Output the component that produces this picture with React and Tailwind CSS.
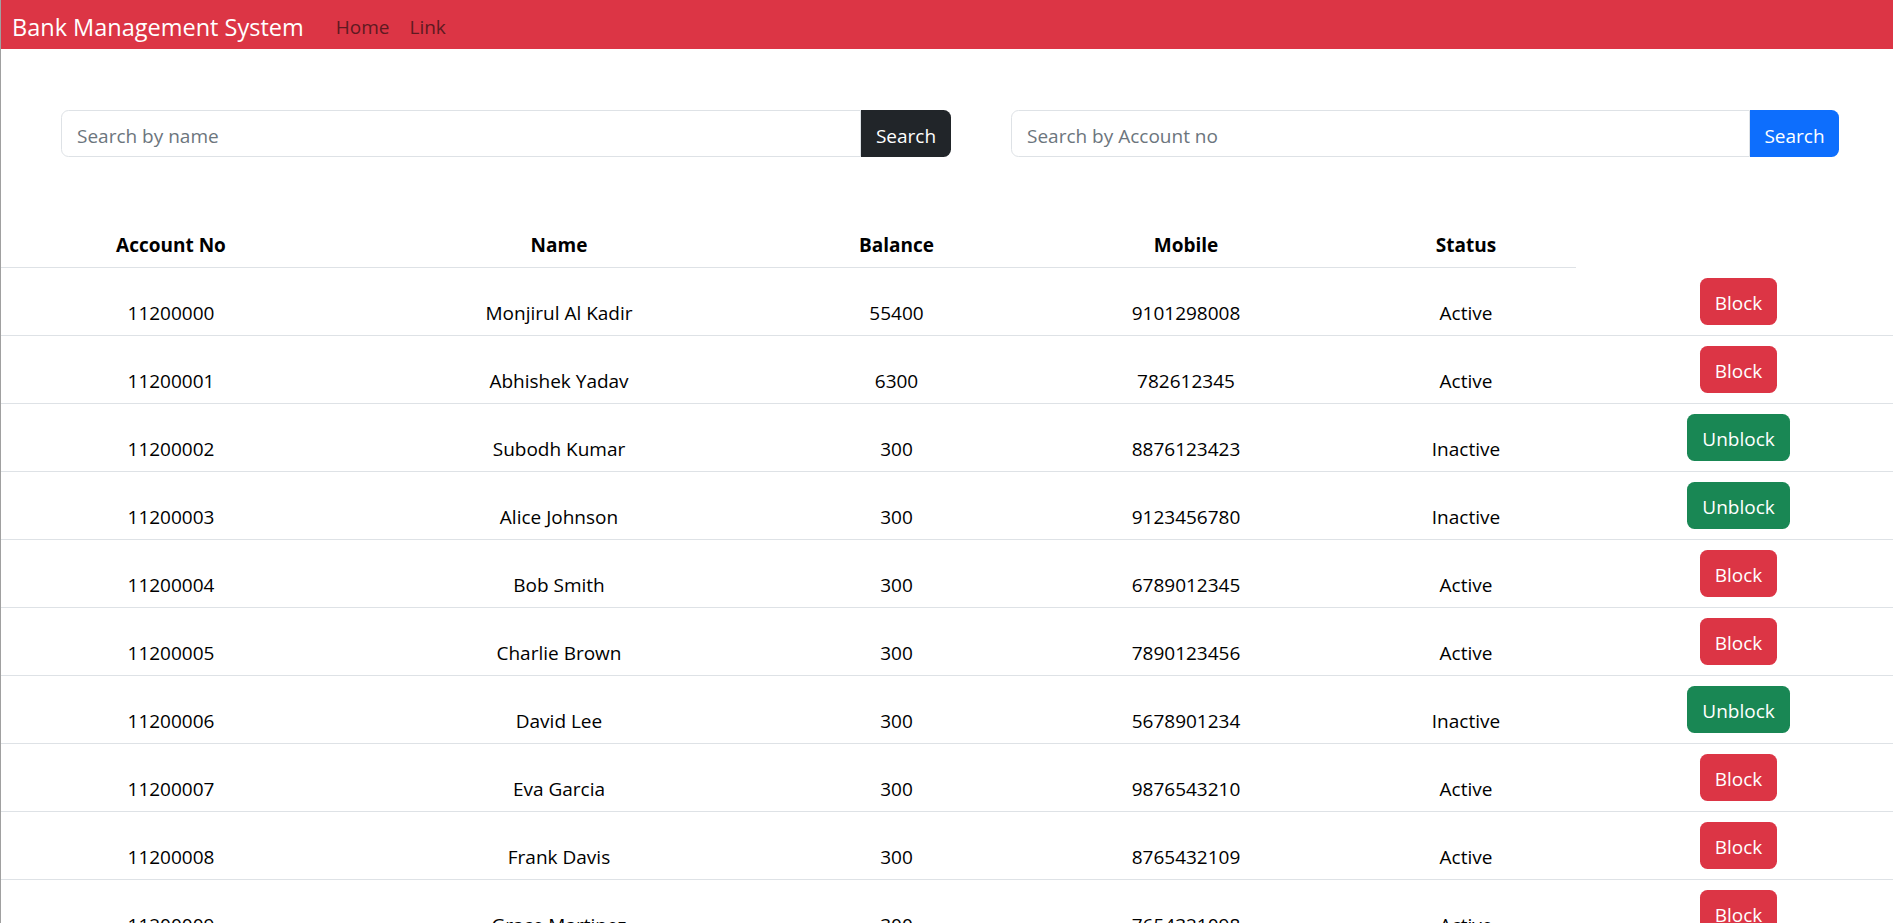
import React from "react";

const rows = [
  ["11200000", "Monjirul Al Kadir", "55400", "9101298008", "Active"],
  ["11200001", "Abhishek Yadav", "6300", "782612345", "Active"],
  ["11200002", "Subodh Kumar", "300", "8876123423", "Inactive"],
  ["11200003", "Alice Johnson", "300", "9123456780", "Inactive"],
  ["11200004", "Bob Smith", "300", "6789012345", "Active"],
  ["11200005", "Charlie Brown", "300", "7890123456", "Active"],
  ["11200006", "David Lee", "300", "5678901234", "Inactive"],
  ["11200007", "Eva Garcia", "300", "9876543210", "Active"],
  ["11200008", "Frank Davis", "300", "8765432109", "Active"],
  ["11200009", "Grace Martinez", "300", "7654321098", "Active"],
  ["11200010", "Henry Wilson", "300", "6543210987", "Active"],
];

const cols = "grid grid-cols-[340px_436px_239px_340px_220px_325px]";

export default function App() {
  return (
    <div className="h-[923px] overflow-hidden bg-white border-l border-[#a0a0a0] font-['Segoe_UI','Open_Sans',sans-serif] text-[19px] text-[#212529]">
      <nav className="h-[49px] bg-[#dc3545] flex items-center pl-[11px] pt-[5px]">
        <span className="text-[23.5px] text-white leading-[37px]">Bank Management System</span>
        <div className="flex ml-[32px] gap-[20px] text-[19px] text-[#5e1a21]">
          <span>Home</span>
          <span>Link</span>
        </div>
      </nav>

      <div className="flex pt-[61px] pl-[60px] gap-[60px]">
        <div className="flex w-[890px] h-[47px]">
          <input
            className="flex-1 min-w-0 border border-[#dee2e6] rounded-l-[7.5px] px-[15px] pt-[5px] outline-none placeholder:text-[#6c757d] text-[19px]"
            placeholder="Search by name"
          />
          <button className="w-[90px] bg-[#212529] text-white rounded-r-[7.5px] text-[19px] pt-[5px]">Search</button>
        </div>
        <div className="flex w-[828px] h-[47px]">
          <input
            className="flex-1 min-w-0 border border-[#dee2e6] rounded-l-[7.5px] px-[15px] pt-[5px] outline-none placeholder:text-[#6c757d] text-[19px]"
            placeholder="Search by Account no"
          />
          <button className="w-[89px] bg-[#0d6efd] text-white rounded-r-[7.5px] text-[19px] pt-[5px]">Search</button>
        </div>
      </div>

      <div className="mt-[60px] w-[1900px]">
        <div className={cols}>
          {["Account No", "Name", "Balance", "Mobile", "Status"].map((h) => (
            <div key={h} className="pt-[13px] pb-[7px] leading-[30px] font-bold text-center text-black border-b border-[#dee2e6]">
              {h}
            </div>
          ))}
          <div />
        </div>
        {rows.map((r) => {
          const active = r[4] === "Active";
          return (
            <div key={r[0]} className={cols + " border-b border-[#dee2e6] text-black"}>
              {r.map((c, i) => (
                <div key={i} className="flex items-end justify-center pb-[7px] leading-[30px]">
                  {c}
                </div>
              ))}
              <div className="flex justify-center py-[10px]">
                <button
                  className={
                    "h-[47px] px-[15px] pt-[3px] rounded-[7.5px] text-white text-[19px] " +
                    (active ? "bg-[#dc3545]" : "bg-[#198754]")
                  }
                >
                  {active ? "Block" : "Unblock"}
                </button>
              </div>
            </div>
          );
        })}
      </div>
    </div>
  );
}
